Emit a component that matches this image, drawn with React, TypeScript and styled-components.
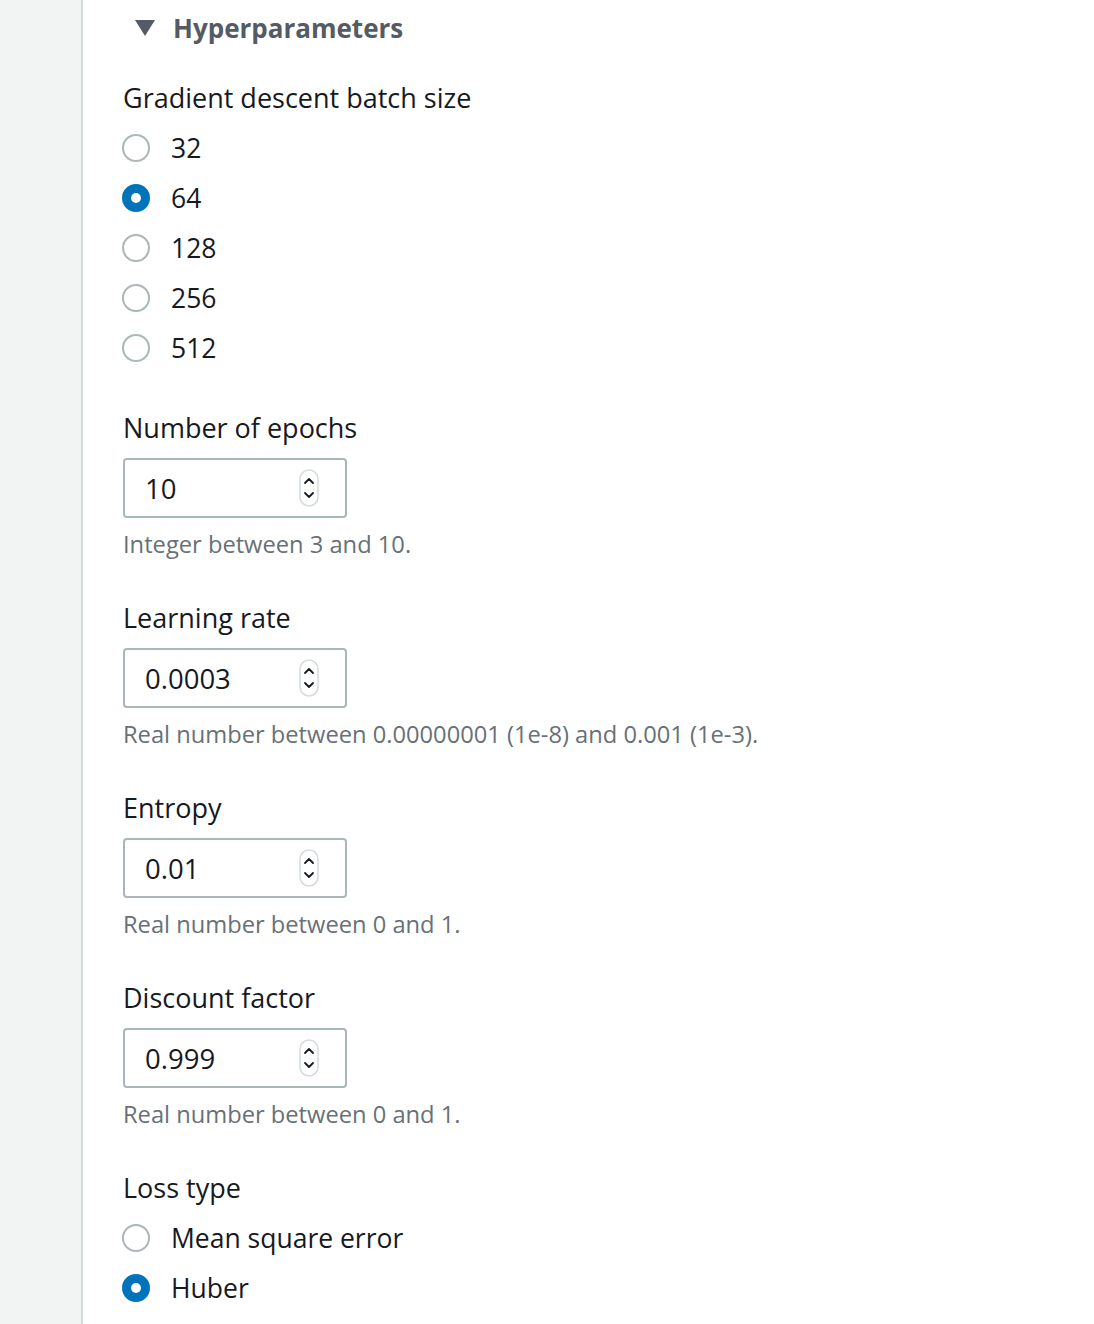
import styled, { createGlobalStyle } from 'styled-components';

const GlobalStyle = createGlobalStyle`
  html, body {
    margin: 0;
    padding: 0;
    background: #ffffff;
  }
  body {
    font-family: "Open Sans", "Noto Sans", sans-serif;
    color: #16191f;
  }
`;

type Option = { label: string; checked?: boolean };

const batchSizes: Option[] = [
  { label: '32' },
  { label: '64', checked: true },
  { label: '128' },
  { label: '256' },
  { label: '512' },
];

const lossTypes: Option[] = [
  { label: 'Mean square error' },
  { label: 'Huber', checked: true },
];

const numberFields = [
  { label: 'Number of epochs', value: '10', hint: 'Integer between 3 and 10.' },
  {
    label: 'Learning rate',
    value: '0.0003',
    hint: 'Real number between 0.00000001 (1e-8) and 0.001 (1e-3).',
  },
  { label: 'Entropy', value: '0.01', hint: 'Real number between 0 and 1.' },
  { label: 'Discount factor', value: '0.999', hint: 'Real number between 0 and 1.' },
];

function RadioGroup({ options }: { options: Option[] }) {
  return (
    <RadioList>
      {options.map(o => (
        <RadioRow key={o.label}>
          <RadioDot $checked={!!o.checked} />
          <RadioLabel>{o.label}</RadioLabel>
        </RadioRow>
      ))}
    </RadioList>
  );
}

function Spinner() {
  return (
    <SpinnerIcon width="20" height="38" viewBox="0 0 20 38">
      <rect x="1" y="1" width="18" height="36" rx="9" fill="#fff" stroke="#d5dbdb" strokeWidth="1.5" />
      <path d="M6 14 L10 10 L14 14" fill="none" stroke="#16191f" strokeWidth="1.8" strokeLinecap="round" strokeLinejoin="round" />
      <path d="M6 24 L10 28 L14 24" fill="none" stroke="#16191f" strokeWidth="1.8" strokeLinecap="round" strokeLinejoin="round" />
    </SpinnerIcon>
  );
}

export default function App() {
  return (
    <>
      <GlobalStyle />
      <Page>
        <Sidebar />
        <Content>
          <SectionHeader>
            <Caret viewBox="0 0 20 16" width="20" height="16">
              <path d="M0 0 H20 L10 16 Z" fill="#545b64" />
            </Caret>
            <HeaderTitle>Hyperparameters</HeaderTitle>
          </SectionHeader>

          <Field $after={35}>
            <Label>Gradient descent batch size</Label>
            <RadioGroup options={batchSizes} />
          </Field>

          {numberFields.map(f => (
            <Field key={f.label} $after={38}>
              <Label>{f.label}</Label>
              <InputBox>
                <InputValue>{f.value}</InputValue>
                <Spinner />
              </InputBox>
              <Hint>{f.hint}</Hint>
            </Field>
          ))}

          <Field $after={0}>
            <Label>Loss type</Label>
            <RadioGroup options={lossTypes} />
          </Field>
        </Content>
      </Page>
    </>
  );
}

const Page = styled.div`
  display: flex;
  min-height: 1324px;
  overflow: hidden;
`;

const Sidebar = styled.div`
  width: 81px;
  flex-shrink: 0;
  background: #f2f3f3;
  border-right: 2px solid #d5dbdb;
`;

const Content = styled.div`
  flex: 1;
  padding-left: 40px;
  display: flex;
  flex-direction: column;
`;

const SectionHeader = styled.div`
  display: flex;
  align-items: center;
  gap: 18px;
  height: 40px;
  margin: 8px 0 30px;
  padding-left: 12px;
`;

const Caret = styled.svg`
  display: block;
  flex-shrink: 0;
`;

const HeaderTitle = styled.span`
  font-size: 26px;
  font-weight: 700;
  color: #545b64;
  line-height: 40px;
`;

const Field = styled.div<{ $after: number }>`
  display: flex;
  flex-direction: column;
  align-items: flex-start;
  margin-bottom: ${p => p.$after}px;
`;

const Label = styled.div`
  font-size: 27px;
  font-weight: 500;
  line-height: 40px;
  color: #16191f;
`;

const RadioList = styled.div`
  display: flex;
  flex-direction: column;
  margin-top: 5px;
`;

const RadioRow = styled.div`
  display: flex;
  align-items: center;
  height: 50px;
`;

const RadioDot = styled.span<{ $checked: boolean }>`
  box-sizing: border-box;
  width: 28px;
  height: 28px;
  margin-left: -1px;
  border-radius: 50%;
  background: #fff;
  border: ${p => (p.$checked ? '9px solid #0073bb' : '2px solid #aab7b8')};
  flex-shrink: 0;
`;

const RadioLabel = styled.span`
  margin-left: 21px;
  font-size: 26.5px;
  font-weight: 500;
  color: #16191f;
`;

const InputBox = styled.div`
  box-sizing: border-box;
  margin-top: 10px;
  width: 224px;
  height: 60px;
  border: 2px solid #aab7b8;
  border-radius: 4px;
  display: flex;
  align-items: center;
  justify-content: space-between;
  padding: 0 26px 0 20px;
`;

const InputValue = styled.span`
  font-size: 27.5px;
  font-weight: 500;
  color: #16191f;
`;

const SpinnerIcon = styled.svg`
  display: block;
`;

const Hint = styled.div`
  margin-top: 10px;
  font-size: 23.7px;
  font-weight: 500;
  line-height: 32px;
  color: #687078;
`;
